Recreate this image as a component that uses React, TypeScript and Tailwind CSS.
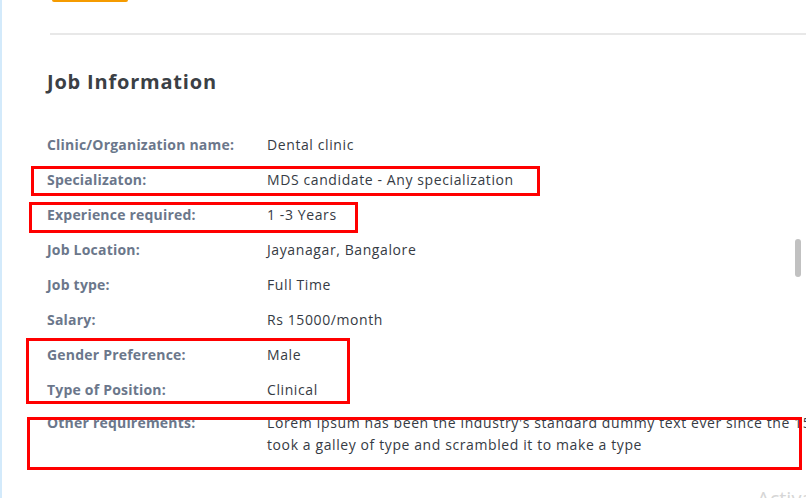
const rows: { label: string; value: string }[] = [
  { label: 'Clinic/Organization name:', value: 'Dental clinic' },
  { label: 'Specializaton:', value: 'MDS candidate - Any specialization' },
  { label: 'Experience required:', value: '1 -3 Years' },
  { label: 'Job Location:', value: 'Jayanagar, Bangalore' },
  { label: 'Job type:', value: 'Full Time' },
  { label: 'Salary:', value: 'Rs 15000/month' },
  { label: 'Gender Preference:', value: 'Male' },
  { label: 'Type of Position:', value: 'Clinical' },
];

function Label({ children }: { children: React.ReactNode }) {
  return (
    <div className="w-[220px] shrink-0 text-[14px] leading-[22px] font-bold tracking-[0.2px] text-[#6b778b]">
      {children}
    </div>
  );
}

export default function App() {
  return (
    <div
      className="relative w-[806px] h-[498px] overflow-hidden bg-white border-l-2 border-[#d3eafb]"
      style={{ fontFamily: '"Open Sans", "Noto Sans", sans-serif' }}
    >
      {/* bottom of the button above */}
      <div className="ml-[50px] w-[76px] h-[2px] bg-[#f59b00] rounded-b-sm" />
      <div className="ml-[48px] mt-[31px] h-[2px] bg-[#e8e8e8]" />

      <h2 className="ml-[45px] mt-[33px] h-[28px] text-[20px] leading-[28px] font-bold tracking-[0.8px] text-[#3b4045]">
        Job Information
      </h2>

      <div className="relative mt-[31px] pl-[45px]">
        {rows.map((r) => (
          <div key={r.label} className="flex items-center h-[35px]">
            <Label>{r.label}</Label>
            <div className="text-[14px] leading-[22px] tracking-[0.6px] text-[#363b44]">{r.value}</div>
          </div>
        ))}
        <div className="flex items-start pt-[5px]">
          <Label>Other requirements:</Label>
          <div className="text-[14px] leading-[22px] tracking-[0.6px] text-[#363b44] whitespace-nowrap">
            Lorem Ipsum has been the industry's standard dummy text ever since the 1500s, when an unknown printer
            <br />
            took a galley of type and scrambled it to make a type
          </div>
        </div>

        {/* annotation boxes drawn over the rows */}
        <div className="absolute left-[29px] top-[39px] w-[509px] h-[30px] border-[3px] border-[#ff0000]" />
        <div className="absolute left-[27px] top-[75px] w-[329px] h-[31px] border-[3px] border-[#ff0000]" />
        <div className="absolute left-[24px] top-[211px] w-[324px] h-[66px] border-[3px] border-[#ff0000]" />
        <div className="absolute left-[25px] top-[290px] w-[775px] h-[53px] border-[3px] border-[#ff0000]" />
      </div>

      <div className="absolute left-[793px] top-[239px] w-[6px] h-[38px] rounded-full bg-[#c1c1c1]" />
      <div className="absolute left-[755px] top-[484px] text-[20px] text-[#d6d6d6] whitespace-nowrap">
        Activate Windows
      </div>
    </div>
  );
}
